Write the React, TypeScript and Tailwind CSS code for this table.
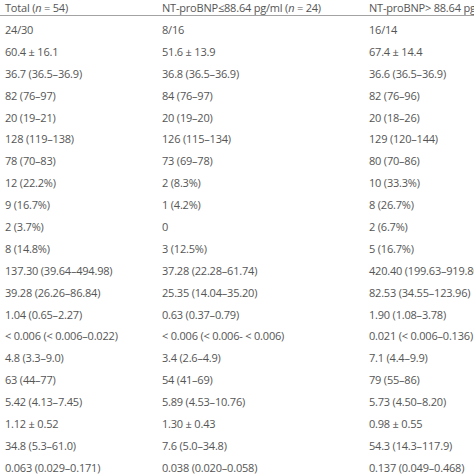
const rows: [string, string, string][] = [
  ["24/30", "8/16", "16/14"],
  ["60.4 ± 16.1", "51.6 ± 13.9", "67.4 ± 14.4"],
  ["36.7 (36.5–36.9)", "36.8 (36.5–36.9)", "36.6 (36.5–36.9)"],
  ["82 (76–97)", "84 (76–97)", "82 (76–96)"],
  ["20 (19–21)", "20 (19–20)", "20 (18–26)"],
  ["128 (119–138)", "126 (115–134)", "129 (120–144)"],
  ["78 (70–83)", "73 (69–78)", "80 (70–86)"],
  ["12 (22.2%)", "2 (8.3%)", "10 (33.3%)"],
  ["9 (16.7%)", "1 (4.2%)", "8 (26.7%)"],
  ["2 (3.7%)", "0", "2 (6.7%)"],
  ["8 (14.8%)", "3 (12.5%)", "5 (16.7%)"],
  ["137.30 (39.64–494.98)", "37.28 (22.28–61.74)", "420.40 (199.63–919.80)"],
  ["39.28 (26.26–86.84)", "25.35 (14.04–35.20)", "82.53 (34.55–123.96)"],
  ["1.04 (0.65–2.27)", "0.63 (0.37–0.79)", "1.90 (1.08–3.78)"],
  ["< 0.006 (< 0.006–0.022)", "< 0.006 (< 0.006- < 0.006)", "0.021 (< 0.006–0.136)"],
  ["4.8 (3.3–9.0)", "3.4 (2.6–4.9)", "7.1 (4.4–9.9)"],
  ["63 (44–77)", "54 (41–69)", "79 (55–86)"],
  ["5.42 (4.13–7.45)", "5.89 (4.53–10.76)", "5.73 (4.50–8.20)"],
  ["1.12 ± 0.52", "1.30 ± 0.43", "0.98 ± 0.55"],
  ["34.8 (5.3–61.0)", "7.6 (5.0–34.8)", "54.3 (14.3–117.9)"],
  ["0.063 (0.029–0.171)", "0.038 (0.020–0.058)", "0.137 (0.049–0.468)"],
]

const cols = "grid grid-cols-[157px_207px_max-content]"

export default function App() {
  return (
    <div className="w-[474px] h-[474px] overflow-hidden bg-white text-[#555] text-[11px] tracking-[-0.2px] whitespace-nowrap font-['Open_Sans',sans-serif]">
      <div className={`${cols} h-[16px] leading-[15px] border-b border-[#a3a3a3] pl-[5px]`}>
        <div>
          Total (<i>n</i> = 54)
        </div>
        <div>
          NT-proBNP≤88.64 pg/ml (<i>n</i> = 24)
        </div>
        <div>
          NT-proBNP&gt; 88.64 pg/ml (<i>n</i> = 30)
        </div>
      </div>
      <div className="pt-[3px] pl-[5px]">
        {rows.map((r, i) => (
          <div key={i} className={`${cols} h-[21.9px] leading-[21.9px]`}>
            <div>{r[0]}</div>
            <div>{r[1]}</div>
            <div>{r[2]}</div>
          </div>
        ))}
      </div>
    </div>
  )
}
